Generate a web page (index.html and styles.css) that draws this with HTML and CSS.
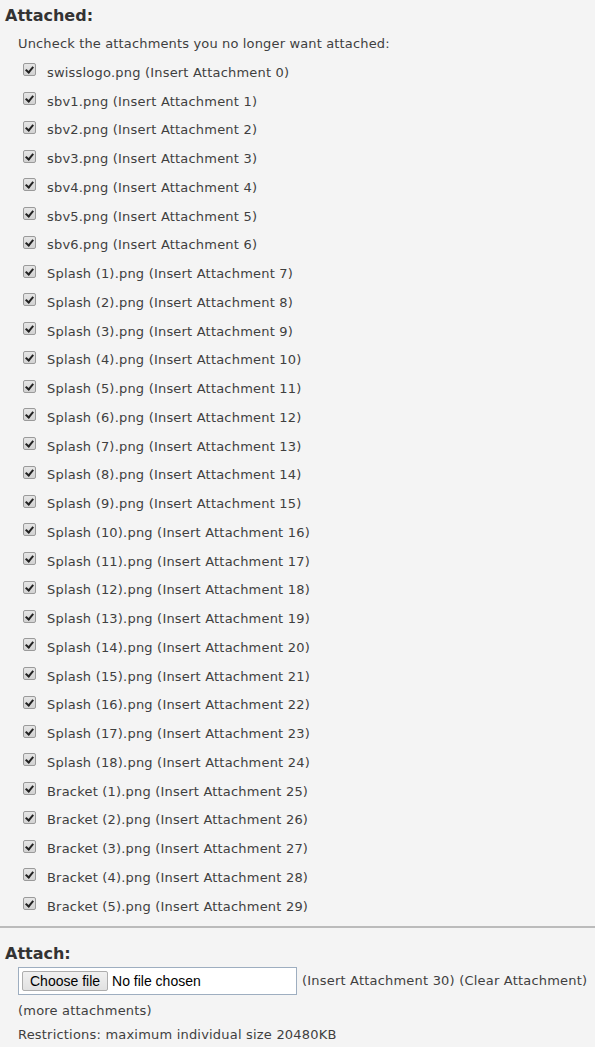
FILE: index.html
```html
<!DOCTYPE html>
<html lang="en">
<head>
  <meta charset="utf-8">
  <title>Attachments</title>
  <link rel="stylesheet" href="styles.css">
</head>
<body>
  <div class="attached">
    <h3>Attached:</h3>
    <p class="hint">Uncheck the attachments you no longer want attached:</p>
    <ul class="files">
      <li><span class="check"></span>swisslogo.png (Insert Attachment 0)</li>
      <li><span class="check"></span>sbv1.png (Insert Attachment 1)</li>
      <li><span class="check"></span>sbv2.png (Insert Attachment 2)</li>
      <li><span class="check"></span>sbv3.png (Insert Attachment 3)</li>
      <li><span class="check"></span>sbv4.png (Insert Attachment 4)</li>
      <li><span class="check"></span>sbv5.png (Insert Attachment 5)</li>
      <li><span class="check"></span>sbv6.png (Insert Attachment 6)</li>
      <li><span class="check"></span>Splash (1).png (Insert Attachment 7)</li>
      <li><span class="check"></span>Splash (2).png (Insert Attachment 8)</li>
      <li><span class="check"></span>Splash (3).png (Insert Attachment 9)</li>
      <li><span class="check"></span>Splash (4).png (Insert Attachment 10)</li>
      <li><span class="check"></span>Splash (5).png (Insert Attachment 11)</li>
      <li><span class="check"></span>Splash (6).png (Insert Attachment 12)</li>
      <li><span class="check"></span>Splash (7).png (Insert Attachment 13)</li>
      <li><span class="check"></span>Splash (8).png (Insert Attachment 14)</li>
      <li><span class="check"></span>Splash (9).png (Insert Attachment 15)</li>
      <li><span class="check"></span>Splash (10).png (Insert Attachment 16)</li>
      <li><span class="check"></span>Splash (11).png (Insert Attachment 17)</li>
      <li><span class="check"></span>Splash (12).png (Insert Attachment 18)</li>
      <li><span class="check"></span>Splash (13).png (Insert Attachment 19)</li>
      <li><span class="check"></span>Splash (14).png (Insert Attachment 20)</li>
      <li><span class="check"></span>Splash (15).png (Insert Attachment 21)</li>
      <li><span class="check"></span>Splash (16).png (Insert Attachment 22)</li>
      <li><span class="check"></span>Splash (17).png (Insert Attachment 23)</li>
      <li><span class="check"></span>Splash (18).png (Insert Attachment 24)</li>
      <li><span class="check"></span>Bracket (1).png (Insert Attachment 25)</li>
      <li><span class="check"></span>Bracket (2).png (Insert Attachment 26)</li>
      <li><span class="check"></span>Bracket (3).png (Insert Attachment 27)</li>
      <li><span class="check"></span>Bracket (4).png (Insert Attachment 28)</li>
      <li><span class="check"></span>Bracket (5).png (Insert Attachment 29)</li>
    </ul>
  </div>

  <hr>

  <div class="attach">
    <h3>Attach:</h3>
    <div class="upload-row">
      <div class="file-box">
        <span class="file-btn">Choose file</span>
        <span class="file-name">No file chosen</span>
      </div>
      <span class="upload-links">(Insert Attachment 30) (Clear Attachment)</span>
    </div>
    <p class="more">(more attachments)</p>
    <p class="limits">Restrictions: maximum individual size 20480KB</p>
  </div>
</body>
</html>
```

FILE: styles.css
```css
body {
  margin: 0;
  background: #f4f4f4;
  color: #3f3f3f;
  font-family: "DejaVu Sans", Verdana, sans-serif;
  font-size: 13px;
  letter-spacing: 0.2px;
}
h3 {
  margin: 0;
  padding-left: 5px;
  font-size: 16px;
  font-weight: bold;
  letter-spacing: 0;
  color: #333;
}
.attached h3 {
  padding-top: 5px;
  line-height: 22px;
}
.hint {
  margin: 7px 0 0 18px;
  line-height: 20px;
  letter-spacing: 0.15px;
}
.files {
  list-style: none;
  margin: 4px 0 0;
  padding: 0 0 0 23px;
}
.files li {
  display: flex;
  align-items: center;
  height: 28.75px;
}
.check {
  position: relative;
  flex: none;
  width: 11px;
  height: 11px;
  margin-right: 11px;
  margin-top: -5px;
  border: 1px solid #9a9a9a;
  border-radius: 2px;
  background: linear-gradient(#e6e6e6, #d2d2d2);
}
.check::after {
  content: "";
  position: absolute;
  left: 3px;
  top: 1px;
  width: 3px;
  height: 6px;
  border: solid #222;
  border-width: 0 2px 2px 0;
  transform: rotate(40deg);
}
hr {
  margin: 5px 0 0;
  border: 0;
  border-top: 2px solid #bbb;
}
.attach h3 {
  margin-top: 15px;
  line-height: 22px;
}
.upload-row {
  display: flex;
  align-items: center;
  margin: 2px 0 0 18px;
}
.file-box {
  display: flex;
  align-items: center;
  width: 274px;
  height: 26px;
  padding-left: 3px;
  border: 1px solid #9eaec0;
  background: #fff;
  font-family: "Liberation Sans", Arial, sans-serif;
  font-size: 14px;
  letter-spacing: 0;
  color: #000;
}
.file-btn {
  padding: 1px 7px;
  border: 1px solid #adadad;
  border-radius: 2px;
  background: linear-gradient(#f0f0f0, #e1e1e1);
  margin-right: 4px;
}
.upload-links {
  margin-left: 5px;
}
.more {
  margin: 7px 0 0 18px;
  line-height: 18px;
}
.limits {
  margin: 6px 0 0 18px;
  line-height: 18px;
}
```
